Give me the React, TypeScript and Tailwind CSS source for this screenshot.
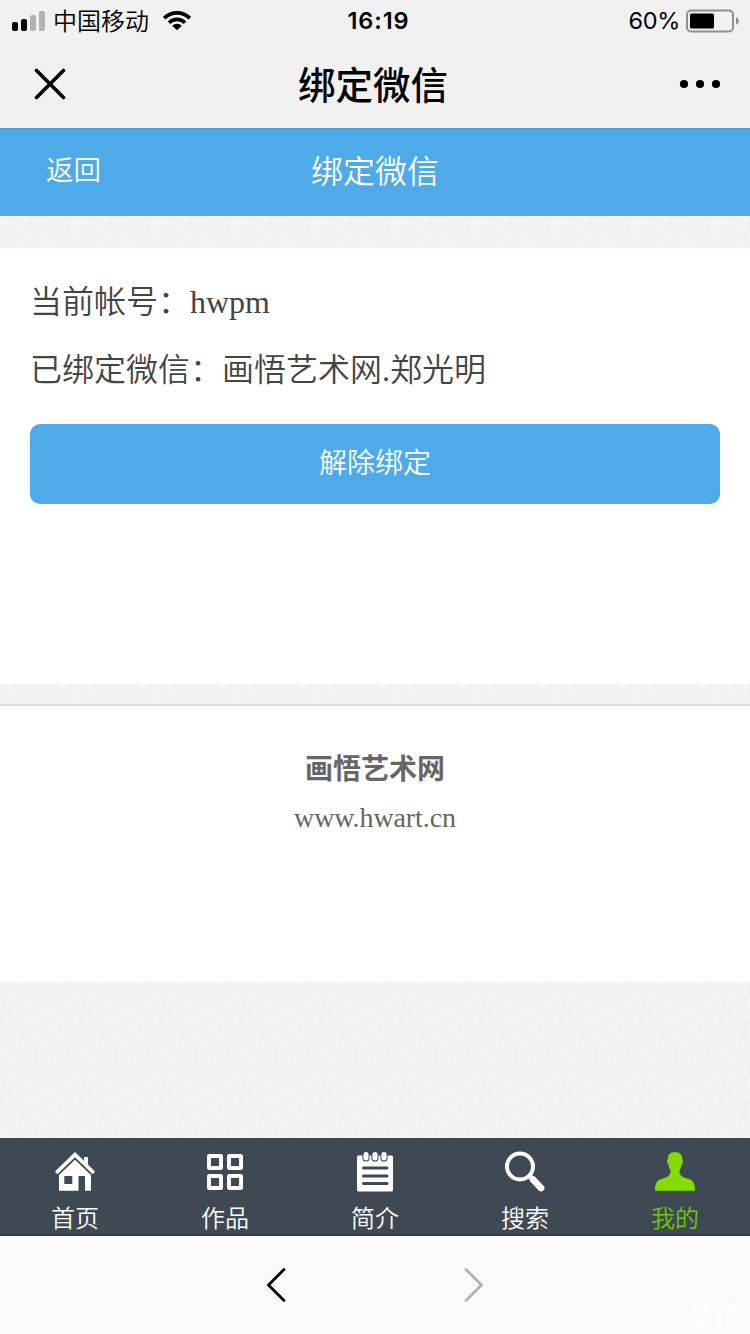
import React from "react";

const sans = "font-['Inter','Noto_Sans_CJK_SC',sans-serif]";
const serif = "font-['Liberation_Serif','Noto_Sans_CJK_SC',serif]";

function Texture({ id }: { id: string }) {
  return (
    <svg className="block h-full w-full" aria-hidden="true">
      <defs>
        <filter id={`${id}-noise`} x="0" y="0" width="100%" height="100%" colorInterpolationFilters="sRGB">
          <feTurbulence type="fractalNoise" baseFrequency="0.15" numOctaves="2" seed="4" stitchTiles="stitch" />
          <feColorMatrix values="0.04 0 0 0 0.936  0.04 0 0 0 0.928  0.04 0 0 0 0.930  0 0 0 0 1" />
        </filter>
        <pattern id={id} width="80" height="80" patternUnits="userSpaceOnUse">
          <rect width="80" height="80" filter={`url(#${id}-noise)`} />
        </pattern>
      </defs>
      <rect width="100%" height="100%" fill={`url(#${id})`} />
    </svg>
  );
}

function StatusBar() {
  return (
    <div className="grid h-10 grid-cols-3 items-center text-2xl leading-10 text-black">
      <div className="flex h-10 items-center pl-3">
        <svg width="34" height="22" viewBox="0 0 34 22">
          <rect x="0" y="12" width="6" height="9" rx="2" fill="#000" />
          <rect x="9" y="9" width="6" height="12" rx="2" fill="#000" />
          <rect x="18" y="5" width="6" height="16" rx="2" fill="#b2b2b2" />
          <rect x="27" y="1" width="6" height="20" rx="2" fill="#b2b2b2" />
        </svg>
        <span className="ml-[7px] whitespace-nowrap pt-[2px] font-[350]">中国移动</span>
        <svg className="ml-[14px]" width="28" height="21" viewBox="0 0 28 21">
          <g fill="none" stroke="#000" strokeWidth="3.6">
            <path d="M1.2 8.1 A18.2 18.2 0 0 1 26.8 8.1" />
            <path d="M6 12.7 A11.4 11.4 0 0 1 22 12.7" />
          </g>
          <path d="M14 20.3 L9.2 15.8 A6.8 6.8 0 0 1 18.8 15.8 Z" fill="#000" />
        </svg>
      </div>
      <div className="pl-[7px] pt-px text-center text-[23.5px] font-semibold tracking-[0.9px]">16:19</div>
      <div className="flex items-center justify-end pr-[10px]">
        <span className="mr-[6px] text-[23.5px] tracking-[-0.3px]">60%</span>
        <svg width="54" height="24" viewBox="0 0 54 24">
          <rect x="1" y="1.5" width="46" height="21" rx="4" fill="none" stroke="#8f8f8f" strokeWidth="2" />
          <rect x="4" y="4.5" width="24" height="15" rx="1.5" fill="#000" />
          <path d="M50 8 Q53 9.5 53 12 T50 16 Z" fill="#8f8f8f" />
        </svg>
      </div>
    </div>
  );
}

function TitleBar() {
  return (
    <div className="grid h-[88px] grid-cols-3 items-center text-black">
      <svg className="ml-[34px]" width="32" height="32" viewBox="0 0 32 32">
        <path d="M2.5 2.5 29.5 29.5 M29.5 2.5 2.5 29.5" stroke="#000" strokeWidth="3.6" strokeLinecap="round" />
      </svg>
      <h1 className="-ml-1 h-[88px] whitespace-nowrap pt-[2px] text-center text-[37.5px] font-medium leading-[88px]">绑定微信</h1>
      <svg className="mr-[29px] justify-self-end" width="42" height="10" viewBox="0 0 42 10">
        <circle cx="5" cy="5" r="4.1" />
        <circle cx="21" cy="5" r="4.1" />
        <circle cx="37" cy="5" r="4.1" />
      </svg>
    </div>
  );
}

function HomeIcon() {
  return (
    <svg width="42" height="42" viewBox="0 0 42 42" fill="#fff">
      <path d="M21 1 L30 9.7 V6 H34 V13.5 L41 20.5 L38.7 23.2 L21 6.2 L3.3 23.2 L1 20.5 Z" />
      <path fillRule="evenodd" d="M21 8.8 L37 24 V39.7 H31 V25 H24.5 V39.7 H5 V24 Z M10.3 25 V33 H18.3 V25 Z" />
    </svg>
  );
}

function GridIcon() {
  return (
    <svg width="42" height="42" viewBox="0 0 42 42" fill="none" stroke="#fff" strokeWidth="4">
      <rect x="5" y="5" width="12" height="12" rx=".5" />
      <rect x="25" y="5" width="12" height="12" rx=".5" />
      <rect x="5" y="25" width="12" height="12" rx=".5" />
      <rect x="25" y="25" width="12" height="12" rx=".5" />
    </svg>
  );
}

function NoteIcon() {
  return (
    <svg width="42" height="42" viewBox="0 0 42 42">
      <rect x="3" y="4.5" width="36" height="36" rx="1.5" fill="#fff" />
      <g stroke="#3f4953" strokeWidth="3" strokeLinecap="round">
        <path d="M9.5 17H33" />
        <path d="M9.5 25H33" />
        <path d="M9.5 32.5H33" />
      </g>
      {[12, 21, 30].map((x) => (
        <g key={x}>
          <rect x={x - 3.6} y="0" width="7.2" height="10.5" rx="3.6" fill="#3f4953" />
          <rect x={x - 2.6} y="1" width="5.2" height="8.4" rx="2.6" fill="#fff" />
          <path d={`M${x} 3V6`} stroke="#d5d8db" strokeWidth="1" />
        </g>
      ))}
    </svg>
  );
}

function SearchIcon() {
  return (
    <svg width="42" height="42" viewBox="0 0 42 42" fill="none" stroke="#fff">
      <circle cx="16" cy="15.5" r="13" strokeWidth="4" />
      <path d="M25 24.5 L28.5 28" strokeWidth="5" />
      <path d="M29 28.5 L37 37" strokeWidth="6.8" strokeLinecap="round" />
    </svg>
  );
}

function PersonIcon() {
  return (
    <svg width="42" height="42" viewBox="0 0 42 42" fill="#84dc00">
      <path d="M21 1 C25.8 1 28.4 3.8 28.2 8.4 C29.2 8.8 29 12.5 27.6 13.4 C27 16 26.4 17.8 25.6 19 C25.2 22.5 26.5 25.2 30 26.4 L35 28 C39.5 29.6 41 33 41 39.8 H1 C1 33 2.5 29.6 7 28 L12 26.4 C15.5 25.2 16.8 22.5 16.4 19 C15.6 17.8 15 16 14.4 13.4 C13 12.5 12.8 8.8 13.8 8.4 C13.6 3.8 16.2 1 21 1 Z" />
    </svg>
  );
}

const tabs = [
  { label: "首页", Icon: HomeIcon, active: false },
  { label: "作品", Icon: GridIcon, active: false },
  { label: "简介", Icon: NoteIcon, active: false },
  { label: "搜索", Icon: SearchIcon, active: false },
  { label: "我的", Icon: PersonIcon, active: true },
];

export default function App() {
  return (
    <div lang="zh-CN" className={`flex h-[1334px] w-[750px] flex-col overflow-hidden bg-white ${sans}`}>
      <div className="h-32 shrink-0 bg-[#f1f1f1]">
        <StatusBar />
        <TitleBar />
      </div>

      <header className="grid h-[88px] shrink-0 grid-cols-3 items-start border-t border-[#4f98cd] bg-[#4eaae8] text-white">
        <span className="pl-[46px] text-[27.5px] leading-[83px] font-[350]">返回</span>
        <h2 className="text-center text-[32px] leading-[86px] font-[350]">绑定微信</h2>
      </header>

      <div className="h-8 shrink-0 bg-[#f3f1f1]">
        <Texture id="paper-top" />
      </div>

      <main className={`h-[436px] shrink-0 bg-white px-[30px] pt-5 text-[32px] leading-[68px] font-[350] text-[#444] ${serif}`}>
        <p>当前帐号：hwpm</p>
        <p>已绑定微信：画悟艺术网.郑光明</p>
        <button className="mt-5 block h-20 w-full rounded-[10px] bg-[#4eaae8] text-[28px] leading-[76px] text-white">
          解除绑定
        </button>
      </main>

      <div className="h-5 shrink-0 bg-[#f3f1f1]">
        <Texture id="paper-middle" />
      </div>

      <footer className={`h-[278px] shrink-0 border-t-2 border-[#dcdcdc] bg-white pt-[40px] text-center text-[28px] leading-[48px] text-[#666] ${serif}`}>
        <p className="font-bold">画悟艺术网</p>
        <p className="tracking-[-0.1px]">www.hwart.cn</p>
      </footer>

      <div className="h-[156px] shrink-0 bg-[#f3f1f1]">
        <Texture id="paper-bottom" />
      </div>

      <nav className="grid h-[98px] shrink-0 grid-cols-5 border-b-2 border-[#363f48] bg-[#3f4953]">
        {tabs.map(({ label, Icon, active }) => (
          <div key={label} className="flex flex-col items-center pt-[13px]">
            <Icon />
            <span className={`mt-[8px] text-2xl leading-9 font-[350] ${active ? "text-[#6fc40c]" : "text-white"}`}>{label}</span>
          </div>
        ))}
      </nav>

      <div className="relative flex h-[98px] shrink-0 items-center justify-center gap-[178px] bg-[#fafafc]">
        <svg width="20" height="34" viewBox="0 0 20 34" fill="none" stroke="#000" strokeWidth="2.8" strokeLinecap="round" strokeLinejoin="round">
          <path d="M18 1.5 2.5 17 18 32.5" />
        </svg>
        <svg width="20" height="34" viewBox="0 0 20 34" fill="none" stroke="#b2b2b2" strokeWidth="2.8" strokeLinecap="round" strokeLinejoin="round">
          <path d="M2 1.5 17.5 17 2 32.5" />
        </svg>
        <svg className="absolute right-[10px] bottom-[4px]" width="48" height="32" viewBox="0 0 48 32" fill="none" stroke="#fff" strokeWidth="1.9" strokeLinecap="round">
          <path d="M5 6 Q13 2 17 3 L12 13 M3 11 L19 8 M4 15 L19 12 M6 18 L17 17 L16 28 L6 29 Z M8 23H15" />
          <path d="M28 7 V29 M24 13 L26 17 M31 11 L32 14 M35 9 L43 7 M39 4 L37 15 M35 15 L44 13 M36 19 V29 M36 19 L42 18 L41 29 M37 24H41" />
        </svg>
      </div>
    </div>
  );
}
